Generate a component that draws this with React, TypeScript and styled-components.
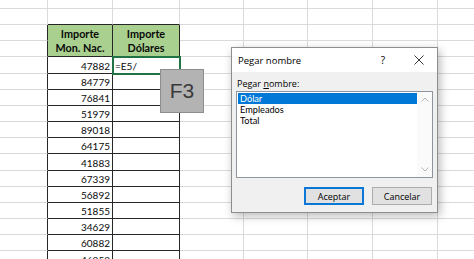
import React from 'react'
import styled, { createGlobalStyle } from 'styled-components'

const GlobalStyle = createGlobalStyle`
  html, body {
    margin: 0;
    padding: 0;
    background: #ffffff;
    overflow: hidden;
  }
`

const COLS = [48, 65, 67, 64, 64, 65, 65, 65]
const ROW_H = 16.17
const ROW_COUNT = 17

const values = [
  '47882', '84779', '76841', '51979', '89018', '64175', '41883',
  '67339', '56892', '51855', '34629', '60882', '46252',
]

const GRID = '#dadada'
const DARK = '#262626'

const Screen = styled.div`
  position: relative;
  width: 474px;
  height: 259px;
  overflow: hidden;
  font-family: Lato, 'Liberation Sans', sans-serif;
`

const Sheet = styled.div`
  display: grid;
  grid-template-columns: ${COLS.map((c) => `${c}px`).join(' ')};
  grid-template-rows: 9px repeat(${ROW_COUNT - 1}, ${ROW_H}px);
`

const Cell = styled.div<{
  $right: string
  $bottom: string
  $bg?: string
  $span?: number
  $align?: 'left' | 'right' | 'center'
  $header?: boolean
  $active?: boolean
}>`
  box-sizing: border-box;
  grid-row: span ${(p) => p.$span ?? 1};
  border-right: 1px solid ${(p) => p.$right};
  border-bottom: 1px solid ${(p) => p.$bottom};
  background: ${(p) => p.$bg ?? '#ffffff'};
  display: flex;
  flex-direction: column;
  justify-content: ${(p) => (p.$header ? 'center' : 'flex-end')};
  align-items: ${(p) =>
    p.$align === 'right' ? 'flex-end' : p.$align === 'center' ? 'center' : 'flex-start'};
  padding: ${(p) => (p.$header ? '1px 0 0' : '0 2px 1px 2px')};
  font-size: ${(p) => (p.$header ? '10.8px' : '10px')};
  line-height: ${(p) => (p.$header ? '14.5px' : '12px')};
  font-weight: ${(p) => (p.$header ? 700 : 400)};
  color: #0a0a0a;
  white-space: nowrap;
  position: relative;
  ${(p) =>
    p.$active &&
    `
    outline: 2px solid #217346;
    outline-offset: -1px;
    z-index: 1;
  `}
`

const KeyCap = styled.div`
  position: absolute;
  left: 160px;
  top: 69px;
  width: 44px;
  height: 44px;
  box-sizing: border-box;
  background: #b3b3b3;
  border: 1px solid #8d8d8d;
  display: flex;
  align-items: center;
  justify-content: center;
  font-family: 'Liberation Sans', Arial, sans-serif;
  font-size: 21px;
  color: #3a3a3a;
  z-index: 2;
`

const Dialog = styled.div`
  position: absolute;
  left: 231px;
  top: 47px;
  width: 207px;
  height: 166px;
  box-sizing: border-box;
  border: 1px solid #8e8e8e;
  background: #f0f0f0;
  box-shadow: 2px 3px 9px rgba(0, 0, 0, 0.28);
  display: flex;
  flex-direction: column;
  font-family: 'Open Sans', 'Noto Sans', sans-serif;
  font-size: 9px;
  color: #000;
  z-index: 3;
`

const TitleBar = styled.div`
  height: 24px;
  background: #ffffff;
  display: flex;
  align-items: center;
  padding-left: 6px;
`

const Title = styled.span`
  flex: 1;
  font-size: 9.5px;
`

const TitleButton = styled.div`
  width: 24px;
  height: 24px;
  display: flex;
  align-items: center;
  justify-content: center;
  font-size: 10px;
`

const CloseButton = styled(TitleButton)`
  margin-left: 12px;
  margin-right: 6px;
`

const DialogBody = styled.div`
  flex: 1;
  display: flex;
  flex-direction: column;
  padding: 0 4px;
`

const FieldLabel = styled.div`
  margin: 6px 0 1px 1px;
  line-height: 12px;
  u {
    text-decoration: underline;
    text-underline-offset: 1px;
  }
`

const ListBox = styled.div`
  height: 87px;
  box-sizing: border-box;
  border: 1px solid #8f959c;
  background: #ffffff;
  display: flex;
`

const ListItems = styled.div`
  flex: 1;
  padding: 1px 0 0 1px;
  font-family: Lato, 'Open Sans', sans-serif;
  font-size: 9.2px;
`

const ListItem = styled.div<{ $selected?: boolean }>`
  height: 11.1px;
  line-height: 11.1px;
  padding-left: 2px;
  background: ${(p) => (p.$selected ? '#0078d7' : 'transparent')};
  color: ${(p) => (p.$selected ? '#ffffff' : '#000')};
`

const ScrollBar = styled.div`
  width: 15px;
  display: flex;
  flex-direction: column;
  justify-content: space-between;
  background: #fafafa;
`

const ScrollArrow = styled.div`
  height: 15px;
  display: flex;
  align-items: center;
  justify-content: center;
`

const ButtonRow = styled.div`
  display: flex;
  justify-content: flex-end;
  gap: 8px;
  margin-top: 9px;
  padding-right: 1px;
`

const DialogButton = styled.div<{ $primary?: boolean }>`
  width: 60px;
  height: 18px;
  box-sizing: border-box;
  background: #e1e1e1;
  border: ${(p) => (p.$primary ? '2px solid #0a78d4' : '1px solid #adadad')};
  display: flex;
  align-items: center;
  justify-content: center;
`

const Chevron = ({ up }: { up?: boolean }) => (
  <svg width="8" height="5" viewBox="0 0 8 5">
    <path
      d={up ? 'M0.5 4.5 L4 1 L7.5 4.5' : 'M0.5 0.5 L4 4 L7.5 0.5'}
      fill="none"
      stroke="#b4b4b4"
      strokeWidth="1"
    />
  </svg>
)

const CloseIcon = () => (
  <svg width="10" height="10" viewBox="0 0 10 10">
    <path d="M0.5 0.5 L9.5 9.5 M9.5 0.5 L0.5 9.5" stroke="#222" strokeWidth="0.9" />
  </svg>
)

const renderCells = () => {
  const cells: React.ReactNode[] = []
  for (let r = 0; r < ROW_COUNT; r++) {
    for (let c = 0; c < COLS.length; c++) {
      const inTableCol = c === 1 || c === 2
      if (inTableCol && r === 3) continue
      if (inTableCol && r === 2) {
        cells.push(
          <Cell
            key={`${r}-${c}`}
            $span={2}
            $right={DARK}
            $bottom={DARK}
            $bg="#a9d08e"
            $align="center"
            $header
          >
            <span>Importe</span>
            <span>{c === 1 ? 'Mon. Nac.' : 'Dólares'}</span>
          </Cell>
        )
        continue
      }
      if (inTableCol && r >= 4) {
        const text = c === 1 ? values[r - 4] : r === 4 ? '=E5/' : ''
        cells.push(
          <Cell
            key={`${r}-${c}`}
            $right={DARK}
            $bottom={DARK}
            $align={c === 1 ? 'right' : 'left'}
            $active={c === 2 && r === 4}
          >
            {text}
          </Cell>
        )
        continue
      }
      const right = c === 0 && r >= 2 ? DARK : GRID
      const bottom = inTableCol && r === 1 ? DARK : GRID
      cells.push(<Cell key={`${r}-${c}`} $right={right} $bottom={bottom} />)
    }
  }
  return cells
}

export default function App() {
  return (
    <Screen>
      <GlobalStyle />
      <Sheet>{renderCells()}</Sheet>
      <KeyCap>F3</KeyCap>
      <Dialog>
        <TitleBar>
          <Title>Pegar nombre</Title>
          <TitleButton>?</TitleButton>
          <CloseButton>
            <CloseIcon />
          </CloseButton>
        </TitleBar>
        <DialogBody>
          <FieldLabel>
            Pegar <u>n</u>ombre:
          </FieldLabel>
          <ListBox>
            <ListItems>
              <ListItem $selected>Dólar</ListItem>
              <ListItem>Empleados</ListItem>
              <ListItem>Total</ListItem>
            </ListItems>
            <ScrollBar>
              <ScrollArrow>
                <Chevron up />
              </ScrollArrow>
              <ScrollArrow>
                <Chevron />
              </ScrollArrow>
            </ScrollBar>
          </ListBox>
          <ButtonRow>
            <DialogButton $primary>Aceptar</DialogButton>
            <DialogButton>Cancelar</DialogButton>
          </ButtonRow>
        </DialogBody>
      </Dialog>
    </Screen>
  )
}
